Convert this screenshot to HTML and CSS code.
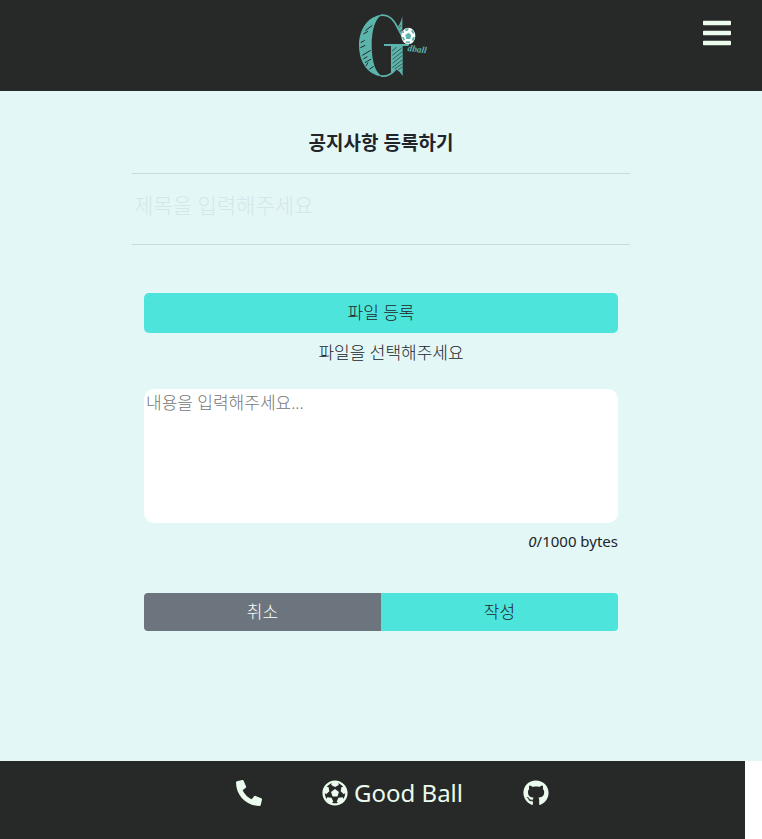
FILE: index.html
```html
<!DOCTYPE html>
<html lang="ko">
<head>
<meta charset="utf-8">
<meta name="viewport" content="width=device-width, initial-scale=1">
<title>공지사항 등록하기</title>
<link rel="stylesheet" href="styles.css">
</head>
<body>
<header class="site-header">
  <a class="logo" href="#" aria-label="Good Ball">
    <svg class="logo-art" viewBox="-15 0 276 273" aria-hidden="true">
      <g fill="#5bb5ac">
        <path d="M128 44C86 46 57 86 57 136C57 188 87 229 128 229C109 222 95 190 95 136C95 84 108 51 128 44Z"/>
        <path d="M153 138H188V228C182 218 175 212 167 208C160 215 158 217 153 219Z"/>
        <path d="M187 48V108C184 97 178 89 172 82C180 73 184 61 187 48Z"/>
      </g>
      <g fill="none" stroke="#5bb5ac" stroke-width="5">
        <path d="M122 46C145 42 163 60 173 84L187 110"/>
        <path d="M122 228C142 231 155 222 167 208"/>
        <path d="M132 135H206" stroke-width="6"/>
      </g>
      <g fill="none" stroke="#272928" stroke-width="2">
        <path d="M76 92L97 76M70 102L84 94M62 128L74 121M61 143L76 136M67 166L92 151M70 177L82 170M75 188L94 177M88 208L101 199M78 198L84 188" stroke-width="3"/>
        <path d="M156 153L170 142M157 166L185 144M158 178L187 155M158 190L186 167M157 203L186 180M164 207L187 191M174 210L187 201M176 84L184 75M181 94L186 88"/>
      </g>
      <ellipse cx="205" cy="108" rx="21" ry="25" fill="#fff"/>
      <g fill="#5bb5ac">
        <path d="M205 98L214 105L211 117H199L196 105Z"/>
        <path d="M196 86L207 84L203 92L196 94ZM217 89L224 99L219 101L213 93ZM225 111L220 124L215 120L218 112ZM211 130L198 130L199 124L209 124ZM191 123L185 112L190 110L195 118ZM186 99L191 91L192 99Z"/>
      </g>
      <text class="logo-text" x="202" y="153" transform="rotate(7 202 153)">dball</text>
    </svg>
  </a>
  <button class="menu-button" type="button" aria-label="메뉴">
    <svg viewBox="0 0 448 512" aria-hidden="true"><path d="M16 132h416c8.837 0 16-7.163 16-16V76c0-8.837-7.163-16-16-16H16C7.163 60 0 67.163 0 76v40c0 8.837 7.163 16 16 16zm0 160h416c8.837 0 16-7.163 16-16v-40c0-8.837-7.163-16-16-16H16c-8.837 0-16 7.163-16 16v40c0 8.837 7.163 16 16 16zm0 160h416c8.837 0 16-7.163 16-16v-40c0-8.837-7.163-16-16-16H16c-8.837 0-16 7.163-16 16v40c0 8.837 7.163 16 16 16z"/></svg>
  </button>
</header>
<main class="page">
  <form class="notice-form">
    <h1 class="form-title">공지사항 등록하기</h1>
    <div class="title-row">
      <input class="title-input" type="text" aria-label="제목" placeholder="제목을 입력해주세요">
    </div>
    <div class="form-body">
      <button class="button button-file" type="button">파일 등록</button>
      <p class="file-name">파일을 선택해주세요</p>
      <textarea class="content-input" aria-label="내용" placeholder="내용을 입력해주세요..."></textarea>
      <p class="byte-count"><em>0</em>/1000 bytes</p>
      <div class="actions">
        <button class="button button-cancel" type="button">취소</button>
        <button class="button button-submit" type="submit">작성</button>
      </div>
    </div>
  </form>
</main>
<footer class="site-footer">
  <ul class="footer-links">
    <li><a href="#" aria-label="전화"><svg viewBox="0 0 512 512" aria-hidden="true"><path d="M497.39 361.8l-112-48a24 24 0 0 0-28 6.9l-49.6 60.6A370.66 370.66 0 0 1 130.6 204.11l60.6-49.6a23.94 23.94 0 0 0 6.9-28l-48-112A24.16 24.16 0 0 0 122.6.61l-104 24A24 24 0 0 0 0 48c0 256.5 207.9 464 464 464a24 24 0 0 0 23.4-18.6l24-104a24.29 24.29 0 0 0-14.01-27.6z"/></svg></a></li>
    <li><a href="#"><svg viewBox="0 0 512 512" aria-hidden="true"><path fill-rule="evenodd" d="M504 256c0 136.967-111.033 248-248 248S8 392.967 8 256 119.033 8 256 8s248 111.033 248 248zm-48 0l-.003-.282-26.064 22.741-62.679-58.5 16.454-84.355 34.303 3.072c-24.889-34.216-60.004-60.089-100.709-73.141l13.651 31.939L256 139l-74.953-41.525 13.651-31.939c-40.631 13.028-75.78 38.87-100.709 73.141l34.565-3.073 16.192 84.355-62.678 58.5-26.064-22.741-.003.282c0 43.015 13.497 83.952 38.472 117.991l7.704-33.897 85.138 10.447 36.301 77.826-29.902 17.786c40.202 13.122 84.29 13.148 124.572 0l-29.902-17.786 36.301-77.826 85.138-10.447 7.704 33.897C442.503 339.952 456 299.015 456 256zm-248.102 69.571l-29.894-91.312L256 177.732l77.996 56.527-29.622 91.312h-96.476z"/></svg><span>Good Ball</span></a></li>
    <li><a href="#" aria-label="GitHub"><svg viewBox="0 0 496 512" aria-hidden="true"><path d="M165.9 397.4c0 2-2.3 3.6-5.2 3.6-3.3.3-5.6-1.3-5.6-3.6 0-2 2.3-3.6 5.2-3.6 3-.3 5.6 1.3 5.6 3.6zm-31.1-4.5c-.7 2 1.3 4.3 4.3 4.9 2.6 1 5.6 0 6.2-2s-1.3-4.3-4.3-5.2c-2.6-.7-5.5.3-6.2 2.3zm44.2-1.7c-2.9.7-4.9 2.6-4.6 4.9.3 2 2.9 3.3 5.9 2.6 2.9-.7 4.9-2.6 4.6-4.6-.3-1.9-3-3.2-5.9-2.9zM244.8 8C106.1 8 0 113.3 0 252c0 110.9 69.8 205.8 169.5 239.2 12.8 2.3 17.3-5.6 17.3-12.1 0-6.2-.3-40.4-.3-61.4 0 0-70 15-84.7-29.8 0 0-11.4-29.1-27.8-36.6 0 0-22.9-15.7 1.6-15.4 0 0 24.9 2 38.6 25.8 21.9 38.6 58.6 27.5 72.9 20.9 2.3-16 8.8-27.1 16-33.7-55.9-6.2-112.3-14.3-112.3-110.5 0-27.5 7.6-41.3 23.6-58.9-2.6-6.5-11.1-33.3 2.6-67.9 20.9-6.5 69 27 69 27 20-5.6 41.5-8.5 62.8-8.5s42.8 2.9 62.8 8.5c0 0 48.1-33.6 69-27 13.7 34.7 5.2 61.4 2.6 67.9 16 17.7 25.8 31.5 25.8 58.9 0 96.5-58.9 104.2-114.8 110.5 9.2 7.9 17 22.9 17 46.4 0 33.7-.3 75.4-.3 83.6 0 6.5 4.6 14.4 17.3 12.1C428.2 457.8 496 362.9 496 252 496 113.3 383.5 8 244.8 8zM97.2 352.9c-1.3 1-1 3.3.7 5.2 1.6 1.6 3.9 2.3 5.2 1 1.3-1 1-3.3-.7-5.2-1.6-1.6-3.9-2.3-5.2-1zm-10.8-8.1c-.7 1.3.3 2.9 2.3 3.9 1.6 1 3.6.7 4.3-.7.7-1.3-.3-2.9-2.3-3.9-2-.6-3.6-.3-4.3.7zm32.4 35.6c-1.6 1.3-1 4.3 1.3 6.2 2.3 2.3 5.2 2.6 6.5 1 1.3-1.3.7-4.3-1.3-6.2-2.2-2.3-5.2-2.6-6.5-1zm-11.4-14.7c-1.6 1-1.6 3.6 0 5.9 1.6 2.3 4.3 3.3 5.6 2.3 1.6-1.3 1.6-3.9 0-6.2-1.4-2.3-4-3.3-5.6-2z"/></svg></a></li>
  </ul>
</footer>
</body>
</html>
```
FILE: styles.css
```css
* {
  box-sizing: border-box;
}

body {
  margin: 0;
  background: #fff;
  color: #212529;
  font-family: "Noto Sans", "Noto Sans CJK KR", sans-serif;
  font-size: 17px;
  font-weight: 300;
  line-height: 24px;
}

button,
input,
textarea {
  margin: 0;
  border: 0;
  font: inherit;
}

.site-header {
  display: grid;
  grid-template-columns: 1fr auto 1fr;
  align-items: start;
  background: #272928;
}

.logo {
  grid-column: 2;
  display: block;
}

.logo-art {
  display: block;
  width: 92px;
  height: 91px;
}

.logo-text {
  fill: #5bb5ac;
  font-family: "Liberation Serif", serif;
  font-size: 28px;
  font-weight: 700;
  font-style: italic;
}

.menu-button {
  justify-self: end;
  margin: 17px 31px 0 0;
  padding: 0;
  background: none;
}

.menu-button svg {
  display: block;
  width: 28px;
  height: 32px;
  fill: #ebfbed;
}

.page {
  padding: 40px 16px 130px;
  background: #e4f7f7;
}

.notice-form {
  max-width: 498px;
  margin: 0 auto;
}

.form-title {
  margin: 0 0 18px;
  font-size: 19px;
  font-weight: 700;
  line-height: 24px;
  text-align: center;
}

.title-row {
  padding: 16px 0 24px;
  border-top: 1px solid #c9dcdc;
  border-bottom: 1px solid #c9dcdc;
}

.title-input {
  display: block;
  width: 100%;
  height: 30px;
  padding: 0 2px;
  background: transparent;
  color: inherit;
  font-size: 21px;
}

.title-input::placeholder {
  color: #d3e6ea;
  opacity: 1;
}

.form-body {
  padding: 48px 12px 0;
}

.button {
  height: 38px;
  padding: 0 12px;
  color: #212529;
  text-align: center;
}

.button-file {
  display: block;
  width: 100%;
  height: 40px;
  border-radius: 5px;
  background: #4de5db;
}

.file-name {
  margin: 8px 0 24px;
  padding-left: 20px;
  text-align: center;
}

.content-input {
  display: block;
  width: 100%;
  height: 134px;
  padding: 2px;
  border-radius: 10px;
  background: #fff;
  color: inherit;
  resize: none;
}

.content-input::placeholder {
  color: #757575;
}

.byte-count {
  margin: 6px 0 40px;
  font-size: 15px;
  font-weight: 400;
  text-align: right;
}

.actions {
  display: grid;
  grid-template-columns: 1fr 1fr;
}

.actions .button-cancel {
  border-radius: 4px 0 0 4px;
  background: #6c757d;
  color: #fff;
}

.button-submit {
  border-radius: 0 4px 4px 0;
  background: #4de5db;
}

.site-footer {
  margin-right: 17px;
  padding: 16px 0 30px;
  background: #272928;
}

.footer-links {
  display: flex;
  justify-content: center;
  gap: 60px;
  margin: 0;
  padding: 0 0 0 40px;
  list-style: none;
}

.footer-links a {
  display: flex;
  align-items: center;
  gap: 6px;
  height: 32px;
  color: #ebfbed;
  font-size: 24px;
  font-weight: 400;
  line-height: 32px;
  text-decoration: none;
}

.footer-links svg {
  width: 26px;
  height: 26px;
  fill: currentColor;
}
```
